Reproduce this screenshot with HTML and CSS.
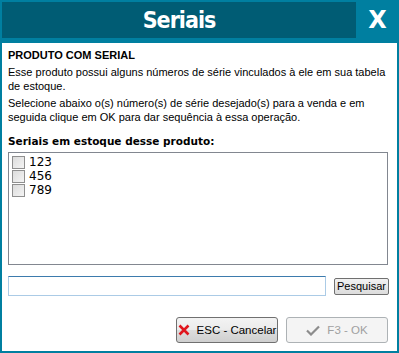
FILE: index.html
```html
<!DOCTYPE html>
<html lang="pt-BR">
<head>
    <meta charset="UTF-8">
    <meta name="viewport" content="width=device-width, initial-scale=1.0">
    <title>Seriais</title>
    <link rel="stylesheet" href="styles.css">
</head>
<body>
    <div class="window">
        <div class="titlebar">
            <div class="title">Seriais</div>
            <div class="close">X</div>
        </div>

        <div class="panel">
            <p class="heading">PRODUTO COM SERIAL</p>
            <p>Esse produto possui alguns números de série vinculados à ele em sua tabela<br>de estoque.</p>
            <p>Selecione abaixo o(s) número(s) de série desejado(s) para a venda e em<br>seguida clique em OK para dar sequência à essa operação.</p>

            <p class="list-label">Seriais em estoque desse produto:</p>
            <div class="serial-list">
                <label class="serial-item"><input type="checkbox"> 123</label>
                <label class="serial-item"><input type="checkbox"> 456</label>
                <label class="serial-item"><input type="checkbox"> 789</label>
            </div>

            <div class="search-row">
                <input type="text" class="search-input">
                <button class="search-btn">Pesquisar</button>
            </div>

            <div class="actions">
                <button class="action-btn">
                    <svg width="12" height="12" viewBox="0 0 12 12">
                        <path d="M1.5 1.5 L10.5 10.5 M10.5 1.5 L1.5 10.5" stroke="#e0161d" stroke-width="2.6"/>
                    </svg>
                    <span>ESC - Cancelar</span>
                </button>
                <button class="action-btn" disabled>
                    <svg width="14" height="11" viewBox="0 0 14 11">
                        <path d="M1 5.5 L5 9.5 L13 1.5" stroke="#8c8c8c" stroke-width="2.2" fill="none"/>
                    </svg>
                    <span>F3 - OK</span>
                </button>
            </div>
        </div>
    </div>
</body>
</html>
```

FILE: styles.css
```css
html, body {
    margin: 0;
    padding: 0;
}
body {
    width: 399px;
    height: 353px;
    background-color: #007fa0;
    font-family: "Liberation Sans", Arial, sans-serif;
    font-size: 11px;
    color: #000;
    overflow: hidden;
}
.window {
    display: flex;
    flex-direction: column;
    height: 353px;
}
.titlebar {
    display: flex;
    height: 39px;
    padding: 2px 0 0 2px;
    margin-bottom: 2px;
}
.title {
    flex: 1;
    height: 36px;
    background-color: #005c74;
    color: #fff;
    font-family: "DejaVu Sans Condensed", "DejaVu Sans", sans-serif;
    font-weight: bold;
    font-size: 23px;
    letter-spacing: -1px;
    line-height: 36px;
    text-align: center;
}
.close {
    width: 43px;
    height: 36px;
    color: #fff;
    font-family: "DejaVu Sans", sans-serif;
    font-weight: bold;
    font-size: 24px;
    line-height: 36px;
    text-align: center;
}
.panel {
    flex: 1;
    margin: 0 2px 2px 2px;
    background-color: #fff;
    padding: 5px 6px 0 6px;
}
p {
    margin: 0 0 3px 0;
    line-height: 14px;
}
.heading {
    font-weight: bold;
}
.list-label {
    font-weight: bold;
    font-family: "DejaVu Sans", sans-serif;
    font-size: 10.5px;
    margin-top: 10px;
    margin-bottom: 4px;
}
.serial-list {
    box-sizing: border-box;
    height: 113px;
    border: 1px solid #828790;
    padding: 2px 3px;
    margin-right: 3px;
}
.serial-item {
    display: flex;
    align-items: center;
    height: 14px;
    font-family: "DejaVu Sans", sans-serif;
    font-size: 12px;
}
.serial-item input {
    appearance: none;
    width: 13px;
    height: 13px;
    margin: 0 4px 0 0;
    border: 1px solid #8f8f8f;
    background: linear-gradient(135deg, #dcdcdc, #f4f4f4);
    box-sizing: border-box;
}
.search-row {
    display: flex;
    align-items: center;
    margin-top: 11px;
}
.search-input {
    width: 318px;
    height: 20px;
    box-sizing: border-box;
    border: 1px solid #abcbe6;
    border-top-color: #3d7bad;
    margin: 0;
    padding: 0 3px;
}
.search-btn {
    margin-left: 8px;
    height: 17px;
    width: 55px;
    padding: 0;
    border: 1px solid #707070;
    border-radius: 2px;
    background: linear-gradient(#f2f2f2, #dcdcdc);
    font-family: "Liberation Sans", Arial, sans-serif;
    font-size: 11px;
    color: #000;
}
.actions {
    display: flex;
    justify-content: flex-end;
    gap: 8px;
    margin-top: 21px;
    margin-right: 3px;
}
.action-btn {
    display: flex;
    align-items: center;
    justify-content: center;
    gap: 7px;
    width: 102px;
    height: 26px;
    padding: 0;
    border: 1px solid #707070;
    border-radius: 3px;
    background: linear-gradient(#f3f3f3 0%, #ebebeb 50%, #dddddd 51%, #cfcfcf 100%);
    font-family: "Liberation Sans", Arial, sans-serif;
    font-size: 11.5px;
    white-space: nowrap;
    color: #000;
}
.action-btn svg {
    flex-shrink: 0;
}
.action-btn:disabled {
    border-color: #adb2b5;
    background: #f4f4f4;
    color: #a0a0a0;
}
```
